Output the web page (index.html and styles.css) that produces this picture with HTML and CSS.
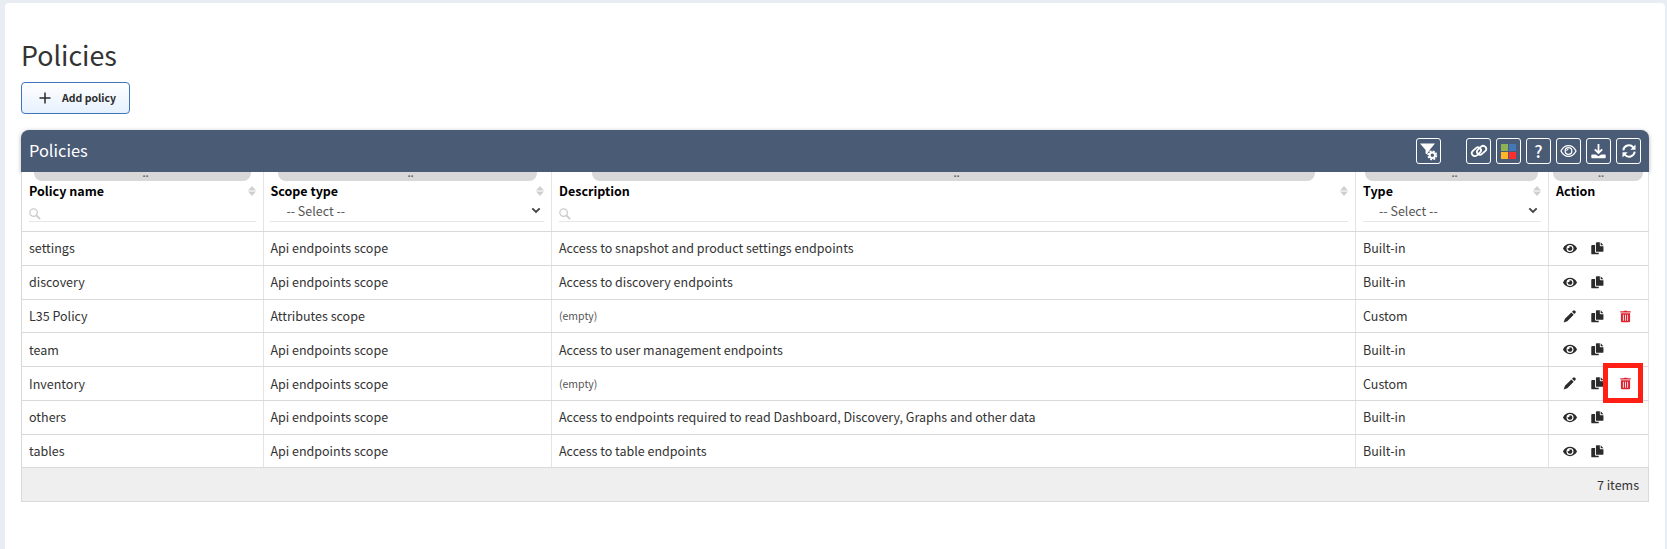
FILE: index.html
```html
<!DOCTYPE html>
<html lang="en">
<head>
<meta charset="utf-8">
<title>Policies</title>
<link rel="stylesheet" href="styles.css">
</head>
<body>
<svg class="sprite" width="0" height="0">
  <defs>
    <symbol id="i-eye" viewBox="0 0 576 512"><path d="M572.5 241.4C518.300 135.600 410.900 64 288 64S57.700 135.600 3.500 241.400a32.400 32.400 0 0 0 0 29.200C57.700 376.400 165.100 448 288 448s230.300-71.600 284.500-177.400a32.400 32.400 0 0 0 0-29.200zM288 400a144 144 0 1 1 144-144 143.900 143.900 0 0 1-144 144zm0-240a95.300 95.300 0 0 0-25.300 3.800 47.900 47.900 0 0 1-66.900 66.900A95.800 95.800 0 1 0 288 160z"/></symbol>
    <symbol id="i-copy" viewBox="0 0 14 14"><path d="M1.300 3.200H4.300V10.200a1.300 1.300 0 0 0 1.300 1.300H8.400V12.300a1 1 0 0 1-1 1H1.300a1 1 0 0 1-1-1V4.200a1 1 0 0 1 1-1z"/><path d="M6.300.4H9.500V3.600a.9.9 0 0 0 .9.900H13.400V9.600a1 1 0 0 1-1 1H6.300a1 1 0 0 1-1-1V1.400a1 1 0 0 1 1-1z"/><path d="M10.400.4L13.400 3.600H10.400z"/></symbol>
    <symbol id="i-pen" viewBox="0 0 14 14"><path d="M9.700 1.900l1.100-1.100a1.500 1.500 0 0 1 2.100 0l.4.4a1.500 1.500 0 0 1 0 2.100L12.200 4.400zM9 2.600L11.500 5.100 4.600 12 .7 13.400 2.100 9.500z"/></symbol>
    <symbol id="i-trash" viewBox="0 0 12 13"><path d="M.3.900H3.900L4.400.2H7.600L8.100.9H11.700V2.100H.3z"/><path fill-rule="evenodd" d="M1 3H11V11.400a1.400 1.400 0 0 1-1.400 1.400H2.400a1.400 1.400 0 0 1-1.400-1.400zM3.200 4.700V11h.9V4.700zM5.550 4.700V11h.9V4.700zM7.900 4.700V11h.9V4.700z"/></symbol>
    <symbol id="i-search" viewBox="0 0 12 12"><circle cx="4.600" cy="4.600" r="3.800" fill="none" stroke="currentColor" stroke-width="1.200"/><path d="M7.600 7.600L10.600 10.600" stroke="currentColor" stroke-width="1.900" stroke-linecap="round"/></symbol>
    <symbol id="i-sort" viewBox="0 0 8 10"><path d="M0 4.500L4 0 8 4.500zM0 5.500H8L4 10z"/></symbol>
    <symbol id="i-chev" viewBox="0 0 10 7"><path d="M1.300 1.300L5 5 8.700 1.300" fill="none" stroke="currentColor" stroke-width="1.900"/></symbol>
  </defs>
</svg>
<main class="page">
  <h1 class="title">Policies</h1>
  <button class="add"><svg width="12" height="12" viewBox="0 0 12 12"><path d="M6 .5V11.500M.5 6H11.500" stroke="currentColor" stroke-width="1.500"/></svg><span>Add policy</span></button>
  <section class="table">
    <header class="bar">
      <h2 class="bar-title">Policies</h2>
      <div class="tools">
        <span class="tool filter"><svg width="19" height="19" viewBox="0 0 19 19"><path d="M1 1.500H16L10.600 8V14L6.600 11.500V8z" fill="currentColor"/><circle cx="13.300" cy="13.300" r="5.300" fill="#4a5b76"/><circle cx="13.300" cy="13.300" r="2.700" fill="none" stroke="currentColor" stroke-width="2"/><circle cx="13.300" cy="13.300" r="4.100" fill="none" stroke="currentColor" stroke-width="1.700" stroke-dasharray="1.900 1.320"/></svg></span>
        <span class="tool"><svg width="18" height="18" viewBox="0 0 18 18" fill="none" stroke="currentColor" stroke-width="1.800"><rect x="1.300" y="6.700" width="10.200" height="6" rx="3" transform="rotate(-42 6.400 9.700)"/><rect x="6.500" y="5.300" width="10.200" height="6" rx="3" transform="rotate(-42 11.600 8.300)"/></svg></span>
        <span class="tool colors"><i class="green"></i><i class="blue"></i><i class="amber"></i><i class="red"></i></span>
        <span class="tool q">?</span>
        <span class="tool"><svg width="17" height="14" viewBox="0 0 17 14" fill="none" stroke="currentColor" stroke-width="1.300"><path d="M1 7C4.500-.2 12.500-.2 16 7 12.500 14.200 4.500 14.200 1 7z"/><circle cx="8.500" cy="7" r="3.300"/><path d="M6.700 7a1.800 1.800 0 0 1 1.800-1.800" stroke-width="1"/></svg></span>
        <span class="tool"><svg width="15" height="15" viewBox="0 0 15 15"><path d="M7.500 0V8.500M3.800 5.300L7.500 9 11.200 5.300" fill="none" stroke="currentColor" stroke-width="1.800"/><path d="M1 10.500H4.800L7.500 12.200 10.200 10.500H14a.7.7 0 0 1 .7.700V13.600a.7.7 0 0 1-.7.700H1a.7.7 0 0 1-.7-.7V11.200a.7.7 0 0 1 .7-.7z" fill="currentColor"/></svg></span>
        <span class="tool"><svg width="14" height="14" viewBox="0 0 14 14"><path d="M1.300 6.300A5.700 5.700 0 0 1 11.300 3.300M12.700 7.700A5.700 5.700 0 0 1 2.700 10.700" fill="none" stroke="currentColor" stroke-width="1.900"/><path d="M13.500.5V5.700H8.300zM.5 13.500V8.300H5.700z" fill="currentColor"/></svg></span>
      </div>
    </header>
    <div class="row head">
      <div class="cell"><b class="grip g1">..</b><div class="label">Policy name<svg class="sort"><use href="#i-sort"/></svg></div><div class="field"><svg class="search"><use href="#i-search"/></svg></div></div>
      <div class="cell"><b class="grip g2">..</b><div class="label">Scope type<svg class="sort"><use href="#i-sort"/></svg></div><div class="field select">-- Select --<svg class="chev"><use href="#i-chev"/></svg></div></div>
      <div class="cell"><b class="grip g3">..</b><div class="label">Description<svg class="sort"><use href="#i-sort"/></svg></div><div class="field"><svg class="search"><use href="#i-search"/></svg></div></div>
      <div class="cell"><b class="grip g4">..</b><div class="label">Type<svg class="sort"><use href="#i-sort"/></svg></div><div class="field select">-- Select --<svg class="chev"><use href="#i-chev"/></svg></div></div>
      <div class="cell"><b class="grip g5">..</b><div class="label">Action</div></div>
    </div>
    <div class="row"><div class="cell">settings</div><div class="cell">Api endpoints scope</div><div class="cell">Access to snapshot and product settings endpoints</div><div class="cell">Built-in</div><div class="cell acts"><svg class="eye"><use href="#i-eye"/></svg><svg class="copy"><use href="#i-copy"/></svg></div></div>
    <div class="row"><div class="cell">discovery</div><div class="cell">Api endpoints scope</div><div class="cell">Access to discovery endpoints</div><div class="cell">Built-in</div><div class="cell acts"><svg class="eye"><use href="#i-eye"/></svg><svg class="copy"><use href="#i-copy"/></svg></div></div>
    <div class="row short"><div class="cell">L35 Policy</div><div class="cell">Attributes scope</div><div class="cell empty">(empty)</div><div class="cell">Custom</div><div class="cell acts"><svg class="pen"><use href="#i-pen"/></svg><svg class="copy"><use href="#i-copy"/></svg><svg class="trash"><use href="#i-trash"/></svg></div></div>
    <div class="row low"><div class="cell">team</div><div class="cell">Api endpoints scope</div><div class="cell">Access to user management endpoints</div><div class="cell">Built-in</div><div class="cell acts"><svg class="eye"><use href="#i-eye"/></svg><svg class="copy"><use href="#i-copy"/></svg></div></div>
    <div class="row low"><div class="cell">Inventory</div><div class="cell">Api endpoints scope</div><div class="cell empty">(empty)</div><div class="cell">Custom</div><div class="cell acts"><svg class="pen"><use href="#i-pen"/></svg><svg class="copy"><use href="#i-copy"/></svg><svg class="trash"><use href="#i-trash"/></svg><span class="mark"></span></div></div>
    <div class="row"><div class="cell">others</div><div class="cell">Api endpoints scope</div><div class="cell">Access to endpoints required to read Dashboard, Discovery, Graphs and other data</div><div class="cell">Built-in</div><div class="cell acts"><svg class="eye"><use href="#i-eye"/></svg><svg class="copy"><use href="#i-copy"/></svg></div></div>
    <div class="row short"><div class="cell">tables</div><div class="cell">Api endpoints scope</div><div class="cell">Access to table endpoints</div><div class="cell">Built-in</div><div class="cell acts"><svg class="eye"><use href="#i-eye"/></svg><svg class="copy"><use href="#i-copy"/></svg></div></div>
    <footer class="foot">7 items</footer>
  </section>
</main>
</body>
</html>
```
FILE: styles.css
```css
* { box-sizing: border-box; }
body {
  margin: 0;
  height: 549px;
  padding: 3px 2px 0 5px;
  overflow: hidden;
  background: #e8edf3;
  color: #333;
  font: 12.510px/20px "Noto Sans CJK SC", "Noto Sans", sans-serif;
}
.sprite { position: absolute; }
svg { display: block; flex: none; }
.page { height: 546px; padding: 30px 16px 0; background: #fff; border-radius: 4px 4px 0 0; }
.title { margin: 0; height: 49px; font-size: 26.8px; line-height: 43px; font-weight: 400; }
.add {
  display: flex; align-items: center; gap: 11px;
  width: 109px; height: 32px; padding: 0 0 1px 17px;
  border: 1px solid #3f75bb; border-radius: 4px;
  background: linear-gradient(#fff, #e6f1fe);
  color: #2b2b2b; font: 700 10.500px/20px "Noto Sans CJK SC", sans-serif;
}
.table { width: 1628px; margin-top: 16px; }
.bar {
  display: flex; align-items: center; justify-content: space-between;
  height: 42px; padding: 0 8px;
  background: #4a5b76; color: #fff; border-radius: 8px 8px 0 0;
  box-shadow: 0 1px 4px rgba(0, 0, 0, .3);
}
.bar-title { margin: 0; padding-bottom: 2px; font-size: 16.400px; font-weight: 400; }
.tools { display: flex; gap: 5px; }
.tool {
  display: flex; align-items: center; justify-content: center;
  width: 25px; height: 26px; border: 1px solid #fff; border-radius: 3px;
}
.filter { margin-right: 20px; }
.colors {
  display: grid; grid-template-columns: 7px 7px; grid-auto-rows: 7px; gap: 1px;
  align-content: center; align-items: stretch;
}
.green { background: #8db255; }
.blue { background: #4377b8; }
.amber { background: #fdb52a; }
.red { background: #fe2e2e; }
.q { font-size: 17px; font-weight: 500; }
.row {
  position: relative;
  display: grid; grid-template-columns: 242px 288px 804px 193px 100px;
  height: 34px; border: 0 solid #d9d9d9; border-width: 0 0 1px 1px; background: #fff;
}
.row.short { height: 33px; }
.cell { position: relative; display: flex; align-items: center; padding: 0 7px 1px; border-right: 1px solid #e4e4e4; }
.cell:nth-child(2) { padding-left: 6.400px; }
.low .cell, .short .cell { padding-bottom: 0; }
.head { height: 60px; }
.head .cell { display: block; padding-top: 8px; }
.grip {
  position: absolute; top: 0; height: 9px; padding-left: 6px; background: #d8d8d8; border-radius: 0 0 8px 8px;
  color: #666; font: 700 11px/2px "Noto Sans", sans-serif; text-align: center;
}
.g1 { left: 12px; right: 12px; }
.g2 { left: 14px; right: 14px; }
.g3 { left: 40px; right: 40px; }
.g4 { left: 9px; right: 10px; }
.g5 { left: 4px; right: 5px; }
.label { display: flex; justify-content: space-between; align-items: center; height: 21px; color: #000; font-weight: 700; }
.sort { width: 8px; height: 10px; fill: #cfcfcf; }
.field { display: flex; justify-content: space-between; align-items: center; height: 21px; border-bottom: 1px solid #e6e6e6; }
.search { width: 12px; height: 12px; color: #ccc; margin-top: 5px; }
.select { padding: 0 3px 0 16px; color: #555; }
.chev { width: 10px; height: 7px; margin-bottom: 1px; color: #444; }
.empty { font-size: 10.500px; color: #555; }
.acts { padding-left: 14px; color: #2b2b2b; fill: currentColor; }
.eye { width: 14px; height: 13px; margin: 0 14.500px 0 -.5px; }
.pen { width: 13px; height: 13px; margin: 0 15.500px 0 -.5px; }
.copy { width: 13px; height: 13px; }
.trash { width: 11px; height: 13px; fill: #dc2430; margin-left: 16px; }
.mark { position: absolute; left: 54px; top: -4px; width: 40px; height: 40px; border: 5px solid #ff1f14; z-index: 2; }
.foot {
  display: flex; align-items: center; justify-content: flex-end;
  height: 34px; padding-right: 9px; background: #efefef;
  border: 1px solid #d9d9d9; border-top: 0;
}
```
